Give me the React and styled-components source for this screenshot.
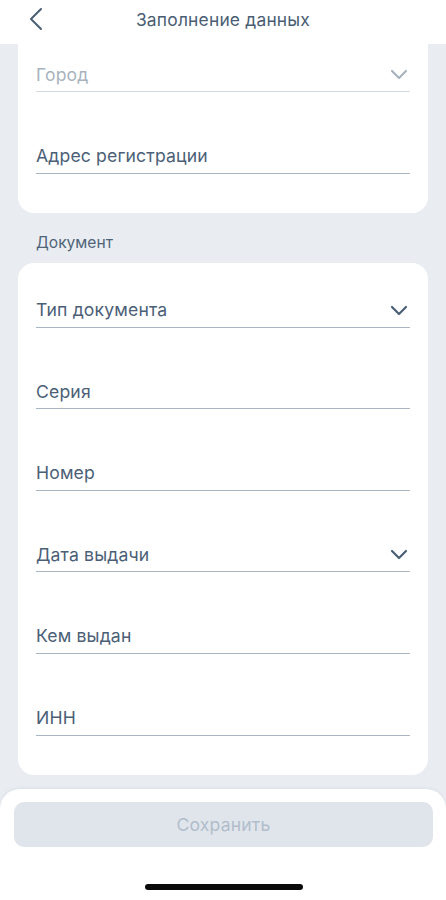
import React from 'react';
import styled, { createGlobalStyle } from 'styled-components';

const GlobalStyle = createGlobalStyle`
  html, body {
    margin: 0;
    padding: 0;
    background: #e9edf2;
  }
  body {
    font-family: Inter, "Noto Sans", sans-serif;
  }
`;

const Screen = styled.div`
  width: 446px;
  height: 900px;
  background: #e9edf2;
  display: flex;
  flex-direction: column;
  overflow: hidden;
`;

const Header = styled.div`
  height: 44px;
  flex-shrink: 0;
  background: #ffffff;
  display: flex;
  align-items: center;
  justify-content: center;
  position: relative;
`;

const BackButton = styled.button`
  position: absolute;
  left: 22px;
  top: 4px;
  width: 28px;
  height: 30px;
  border: 0;
  background: none;
  padding: 0;
  display: flex;
  align-items: center;
  justify-content: center;
`;

const Title = styled.h1`
  margin: 0 0 6px;
  font-size: 17.4px;
  font-weight: 400;
  color: #4a5e73;
  letter-spacing: 0.2px;
`;

const Content = styled.div`
  flex: 1;
  padding: 0 18px;
  display: flex;
  flex-direction: column;
`;

const Card = styled.div`
  background: #ffffff;
  border-radius: ${(p) => (p.$cut ? '0 0 16px 16px' : '16px')};
  padding: ${(p) => (p.$cut ? '0' : '17px')} 18px 39px;
  display: flex;
  flex-direction: column;
  gap: 33.6px;
`;

const SectionLabel = styled.div`
  font-size: 15.6px;
  color: #4f6479;
  padding: 21px 18px 11px;
  line-height: 18px;
`;

const Field = styled.div`
  height: 48px;
  box-sizing: border-box;
  border-bottom: 1px solid ${(p) => (p.$muted ? '#d3dbe3' : '#a9b6c2')};
  display: flex;
  align-items: center;
  justify-content: space-between;
  padding-top: 17px;
`;

const FieldText = styled.span`
  font-size: 17.6px;
  color: ${(p) => (p.$muted ? '#a8b3be' : '#4b6076')};
  line-height: 20px;
  margin-top: -3px;
  letter-spacing: 0.15px;
`;

const Chevron = ({ color }) => (
  <svg width="18" height="12" viewBox="0 0 18 12" style={{ marginRight: 2, marginTop: -4 }}>
    <path d="M2 3 L9 10 L16 3" fill="none" stroke={color} strokeWidth="2.2" strokeLinecap="round" strokeLinejoin="round" />
  </svg>
);

const BottomPanel = styled.div`
  margin-top: 14px;
  height: 111px;
  flex-shrink: 0;
  background: #ffffff;
  border-radius: 20px 20px 0 0;
  box-shadow: 0 -1px 3px rgba(120, 135, 150, 0.12);
  padding: 13px 13px 0 14px;
  box-sizing: border-box;
  display: flex;
  flex-direction: column;
  align-items: center;
`;

const SaveButton = styled.button`
  width: 100%;
  height: 45px;
  border: 0;
  border-radius: 10px;
  background: #e0e5eb;
  color: #b1bdcb;
  font-family: Inter, "Noto Sans", sans-serif;
  font-size: 17.6px;
  letter-spacing: 0.15px;
`;

const HomeIndicator = styled.div`
  margin-top: 37px;
  width: 158px;
  height: 6px;
  border-radius: 3px;
  background: #0a0a0a;
`;

const addressFields = [
  { label: 'Город', muted: true, select: true },
  { label: 'Адрес регистрации' },
];

const documentFields = [
  { label: 'Тип документа', select: true },
  { label: 'Серия' },
  { label: 'Номер' },
  { label: 'Дата выдачи', select: true },
  { label: 'Кем выдан' },
  { label: 'ИНН' },
];

const FormField = ({ label, muted, select }) => (
  <Field $muted={muted}>
    <FieldText $muted={muted}>{label}</FieldText>
    {select && <Chevron color={muted ? '#a8b3be' : '#4a5f75'} />}
  </Field>
);

export default function App() {
  return (
    <Screen>
      <GlobalStyle />
      <Header>
        <BackButton aria-label="Назад">
          <svg width="14" height="24" viewBox="0 0 14 24">
            <path d="M12 2 L2 12 L12 22" fill="none" stroke="#4a5f75" strokeWidth="2" strokeLinecap="round" strokeLinejoin="round" />
          </svg>
        </BackButton>
        <Title>Заполнение данных</Title>
      </Header>
      <Content>
        <Card $cut>
          {addressFields.map((f) => (
            <FormField key={f.label} {...f} />
          ))}
        </Card>
        <SectionLabel>Документ</SectionLabel>
        <Card>
          {documentFields.map((f) => (
            <FormField key={f.label} {...f} />
          ))}
        </Card>
      </Content>
      <BottomPanel>
        <SaveButton disabled>Сохранить</SaveButton>
        <HomeIndicator />
      </BottomPanel>
    </Screen>
  );
}
